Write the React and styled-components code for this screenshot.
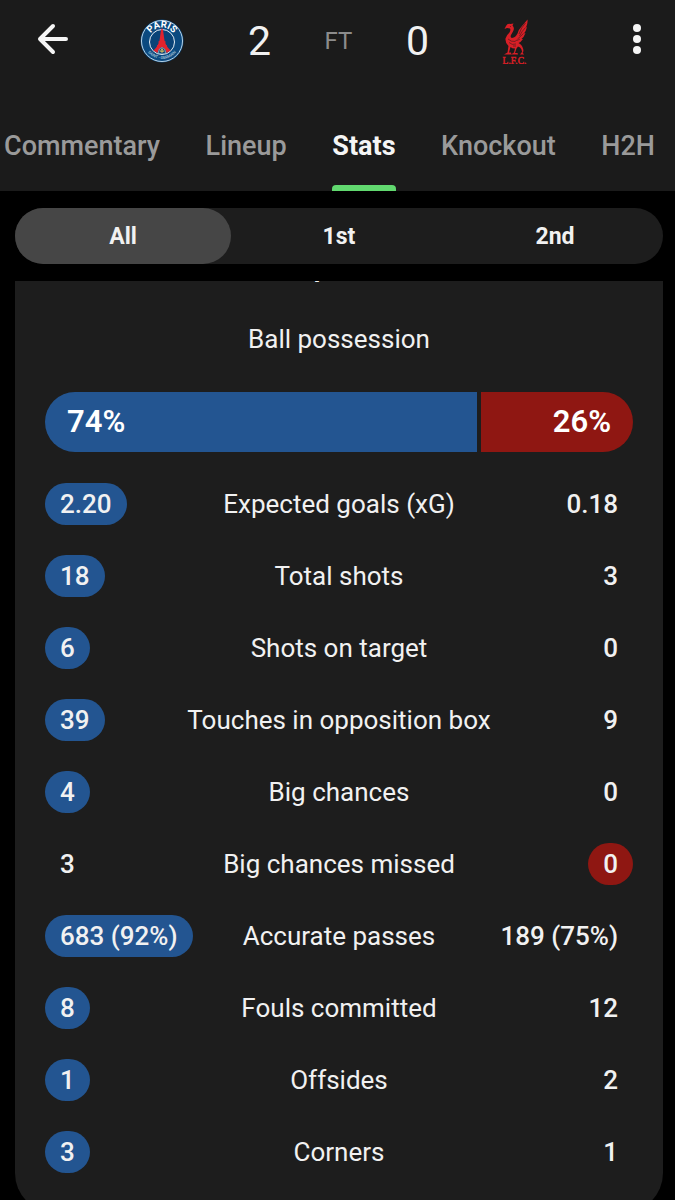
import React, { useState } from 'react';
import styled, { createGlobalStyle } from 'styled-components';

const GlobalStyle = createGlobalStyle`
    * {
        box-sizing: border-box;
    }

    body {
        margin: 0;
        background-color: #000000;
        color: #f1f1f1;
        font-family: Roboto, 'Noto Sans', sans-serif;
    }

    button {
        padding: 0;
        border: none;
        background: none;
        color: inherit;
        font-family: inherit;
        cursor: pointer;
    }
`

const Page = styled.div`
    overflow: hidden;
`

const Header = styled.header`
    background-color: #1b1b1b;
`

const ScoreBar = styled.div`
    display: flex;
    align-items: center;
    justify-content: space-between;
    height: 82px;
    padding: 0 20px 0 36px;
`

const IconButton = styled.button`
    display: flex;
    align-items: center;
    justify-content: center;
    height: 48px;
    padding-bottom: 4px;
`

const Scoreline = styled.div`
    display: flex;
    align-items: center;
    justify-content: space-between;
    flex: 1;
    margin: 0 82px 0 70px;
`

const Result = styled.div`
    display: grid;
    grid-template-columns: repeat(3, 79px);
    align-items: center;
    justify-items: center;
`

const Score = styled.span`
    font-size: 41px;
    line-height: 48px;
`

const Status = styled.span`
    color: #8c8c8c;
    font-size: 24px;
    line-height: 48px;
`

const Tabs = styled.nav`
    display: flex;
    justify-content: space-between;
    height: 109px;
    padding: 0 20px 0 4px;
`

const Tab = styled.a`
    display: flex;
    flex-direction: column;
    justify-content: flex-end;
    color: ${props => props.$active ? '#f5f5f5' : '#9a9a9a'};
    font-size: 27px;
    font-weight: ${props => props.$active ? 700 : 500};
    line-height: 32px;
    text-decoration: none;
    white-space: nowrap;

    &::after {
        content: '';
        height: 6px;
        margin-top: 23px;
        border-radius: 4px 4px 0 0;
        background-color: ${props => props.$active ? '#61d86f' : 'transparent'};
    }
`

const Content = styled.main`
    padding: 17px 12px 0 15px;
`

const Periods = styled.div`
    display: flex;
    margin-bottom: 17px;
    border-radius: 28px;
    background-color: #1d1d1d;
`

const Period = styled.button`
    flex: 1;
    height: 56px;
    border-radius: 28px;
    && {
        background-color: ${props => props.$active ? '#464646' : 'transparent'};
    }
    font-size: 23px;
    font-weight: 700;
`

const Card = styled.section`
    overflow: hidden;
    padding: 0 30px 25px;
    border-radius: 0 0 40px 40px;
    background-color: #1d1d1d;
`

// scrolled up under the period switch, so only the descender is left in view
const CardTitle = styled.h2`
    margin: -29px 0 39px;
    font-size: 26px;
    font-weight: 700;
    line-height: 32px;
    text-align: center;
`

const BarTitle = styled.h3`
    margin: 0 0 36px;
    font-size: 26px;
    font-weight: 400;
    line-height: 32px;
    text-align: center;
`

const Bar = styled.div`
    display: grid;
    gap: 4px;
    height: 60px;
    margin: 37px 0 16px;
    overflow: hidden;
    border-radius: 30px;
    color: #ffffff;
    font-size: 31px;
    font-weight: 600;
    line-height: 60px;
`

const BarShare = styled.div`
    padding: 0 22px;
    background-color: ${props => props.$away ? '#8f1712' : '#235591'};
    text-align: ${props => props.$away ? 'right' : 'left'};
`

const StatTable = styled.table`
    display: block;
`

const StatBody = styled.tbody`
    display: block;
`

const StatRow = styled.tr`
    display: grid;
    grid-template-columns: 1fr auto 1fr;
    align-items: center;
    height: 72px;
`

const StatLabel = styled.th`
    padding: 0;
    font-size: 26px;
    font-weight: 400;
    line-height: 32px;
    white-space: nowrap;
`

const StatCell = styled.td`
    display: flex;
    justify-content: ${props => props.$away ? 'flex-end' : 'flex-start'};
    padding: 0;
`

const Value = styled.span`
    padding: 0 15px;
    border-radius: 21px;
    background-color: ${props => props.$color || 'transparent'};
    font-size: 26px;
    font-weight: 500;
    line-height: 42px;
    white-space: nowrap;
`

const HOME_COLOR = '#235591';
const AWAY_COLOR = '#8f1712';

const tabs = ['Commentary', 'Lineup', 'Stats', 'Knockout', 'H2H'];
const periods = ['All', '1st', '2nd'];
const possession = { home: 74, away: 26 };

const stats = [
    { label: 'Expected goals (xG)', home: '2.20', away: '0.18', best: 'home' },
    { label: 'Total shots', home: '18', away: '3', best: 'home' },
    { label: 'Shots on target', home: '6', away: '0', best: 'home' },
    { label: 'Touches in opposition box', home: '39', away: '9', best: 'home' },
    { label: 'Big chances', home: '4', away: '0', best: 'home' },
    { label: 'Big chances missed', home: '3', away: '0', best: 'away' },
    { label: 'Accurate passes', home: '683 (92%)', away: '189 (75%)', best: 'home' },
    { label: 'Fouls committed', home: '8', away: '12', best: 'home' },
    { label: 'Offsides', home: '1', away: '2', best: 'home' },
    { label: 'Corners', home: '3', away: '1', best: 'home' },
];

function BackIcon() {
    return (
        <svg width="34" height="32" viewBox="0 0 34 32" fill="none" stroke="#f5f5f5" strokeWidth="4" strokeLinecap="round" strokeLinejoin="round">
            <path d="M17 3 L4 16 L17 29 M4 16 H30" />
        </svg>
    )
}

function MoreIcon() {
    return (
        <svg width="36" height="36" viewBox="0 0 36 36" fill="#f5f5f5">
            <circle cx="18" cy="7" r="4" />
            <circle cx="18" cy="18" r="4" />
            <circle cx="18" cy="29" r="4" />
        </svg>
    )
}

function ParisCrest() {
    return (
        <svg width="44" height="44" viewBox="0 0 88 88" role="img" aria-label="Paris Saint-Germain">
            <defs>
                <path id="crestTop" d="M17 44 A27 27 0 0 1 71 44" />
                <path id="crestBottom" d="M8 44 A36 36 0 0 0 80 44" />
            </defs>
            <circle cx="44" cy="44" r="43" fill="#0b4a80" />
            <circle cx="44" cy="44" r="41" fill="none" stroke="#b9d3e6" strokeWidth="2" />
            <circle cx="44" cy="46" r="25" fill="#0a4377" stroke="#e3edf4" strokeWidth="2" />
            <path d="M42 22 L44 18 L46 22 L49 43 Q52 55 61 63 L53 68 Q51 57 44 57 Q37 57 35 68 L27 63 Q36 55 39 43 Z" fill="#e2232e" />
            <path d="M37 46 H51 M34 54 H54" stroke="#e2232e" strokeWidth="3" />
            <path d="M36 68 Q38 57 44 57 Q50 57 52 68 Q44 72 36 68 Z" fill="#0a4377" stroke="#dce8f0" strokeWidth="1" />
            <path d="M44 58 Q48 61 45 64 Q49 61 49 65 L45 66 V68 H43 V66 L39 65 Q39 61 43 64 Q40 61 44 58 Z" fill="#c5b35f" />
            <text fill="#ffffff" fontSize="19" fontWeight="700" textAnchor="middle">
                <textPath href="#crestTop" startOffset="50%">PARIS</textPath>
            </text>
            <text fill="#a9c6da" fontSize="8" fontWeight="500" textAnchor="middle">
                <textPath href="#crestBottom" startOffset="50%">SAINT - GERMAIN</textPath>
            </text>
        </svg>
    )
}

function LiverpoolCrest() {
    return (
        <svg width="44" height="46" viewBox="0 0 88 92" role="img" aria-label="Liverpool">
            <g transform="translate(16 2)">
                <g fill="#d81f26">
                    <path d="M7 20 L10 14 Q13 8 19 10 L25 9 L23 13 Q28 18 24 25 L20 32 Q18 37 22 38 Q29 37 33 29 Q35 21 42 14 Q48 7 53 1 Q54 9 50 17 L52 16 Q50 24 46 29 L49 28 Q46 36 41 40 L44 40 Q40 46 35 48 Q42 51 44 59 Q46 64 43 69 L41 61 Q39 56 34 55 L31 59 L28 68 H33 L34 71 H20 L26 67 L28 59 Q22 59 19 56 L16 67 H20 L21 71 H6 L13 67 L15 54 Q8 48 9 39 Q11 32 17 27 Q20 22 18 19 L12 18 Z" />
                    <path d="M42 66 L46 71 H38 Z" />
                </g>
                <g fill="none" stroke="#1b1b1b" strokeWidth="1">
                    <path d="M49 8 Q40 17 36 30 M49 17 Q42 24 37 34 M45 29 Q39 35 33 40 M29 43 Q34 43 38 40" />
                    <path d="M18 15 L20 15 M14 40 Q20 46 29 45 M16 47 Q22 53 30 50 M24 54 L30 54" />
                </g>
                <text x="27" y="89" fill="#d81f26" fontFamily="'Liberation Serif', serif" fontSize="19" fontWeight="400" stroke="#d81f26" strokeWidth="1" textAnchor="middle">L.F.C.</text>
            </g>
        </svg>
    )
}

export default function App()
{
    const [period, setPeriod] = useState('All');

    return (
        <Page>
            <GlobalStyle />
            <Header>
                <ScoreBar>
                    <IconButton aria-label="Back"><BackIcon /></IconButton>
                    <Scoreline>
                        <ParisCrest />
                        <Result>
                            <Score>2</Score>
                            <Status>FT</Status>
                            <Score>0</Score>
                        </Result>
                        <LiverpoolCrest />
                    </Scoreline>
                    <IconButton aria-label="More options"><MoreIcon /></IconButton>
                </ScoreBar>
                <Tabs>
                    {tabs.map(tab => (
                        <Tab key={tab} href={'#' + tab.toLowerCase()} $active={tab == 'Stats'}>{tab}</Tab>
                    ))}
                </Tabs>
            </Header>
            <Content>
                <Periods>
                    {periods.map(name => (
                        <Period key={name} $active={name == period} aria-pressed={name == period} onClick={() => setPeriod(name)}>{name}</Period>
                    ))}
                </Periods>
                <Card>
                    <CardTitle>Top stats</CardTitle>
                    <BarTitle>Ball possession</BarTitle>
                    <Bar style={{ gridTemplateColumns: `${possession.home}fr ${possession.away}fr` }}>
                        <BarShare>{possession.home}%</BarShare>
                        <BarShare $away>{possession.away}%</BarShare>
                    </Bar>
                    <StatTable>
                        <StatBody>
                            {stats.map(stat => (
                                <StatRow key={stat.label}>
                                    <StatCell>
                                        <Value $color={stat.best == 'home' && HOME_COLOR}>{stat.home}</Value>
                                    </StatCell>
                                    <StatLabel scope="row">{stat.label}</StatLabel>
                                    <StatCell $away>
                                        <Value $color={stat.best == 'away' && AWAY_COLOR}>{stat.away}</Value>
                                    </StatCell>
                                </StatRow>
                            ))}
                        </StatBody>
                    </StatTable>
                </Card>
            </Content>
        </Page>
    )
}
